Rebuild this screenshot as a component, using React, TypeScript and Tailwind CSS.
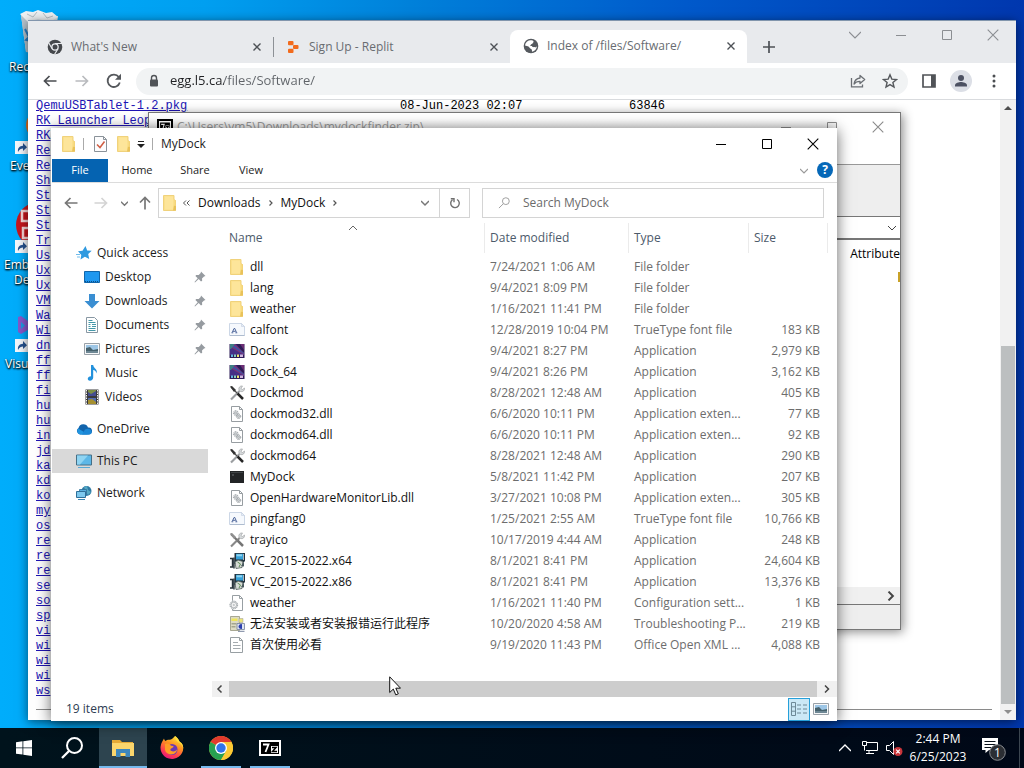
import type { ReactNode } from "react";

type IconProps = { className?: string };

/* ---------- shared glyphs ---------- */

function Cross({ className = "size-3" }: IconProps) {
  return (
    <svg viewBox="0 0 12 12" className={className} fill="none" stroke="currentColor" strokeWidth="1.1">
      <path d="M.7.7l10.6 10.6M11.3.7L.7 11.3" />
    </svg>
  );
}

function Square({ className = "size-3" }: IconProps) {
  return (
    <svg viewBox="0 0 12 12" className={className} fill="none" stroke="currentColor">
      <path d="M1.500 1.500h9v9h-9z" />
    </svg>
  );
}

function Dash({ className = "size-3" }: IconProps) {
  return (
    <svg viewBox="0 0 12 12" className={className} fill="none" stroke="currentColor">
      <path d="M1 6.500h10" />
    </svg>
  );
}

function Chevron({ className = "size-2", d = "M0 2l4 4 4-4", w = 1.2 }: IconProps & { d?: string; w?: number }) {
  return (
    <svg viewBox="0 0 8 8" className={className} fill="none" stroke="currentColor" strokeWidth={w}>
      <path d={d} />
    </svg>
  );
}
const RIGHT = "M2 .5L5.5 4 2 7.5";
const LEFT = "M5.5 .5L2 4l3.500 3.500";
const UP = "M0 6l4-4 4 4";
const CRUMB = "M2.500 1.500L5 4 2.500 6.500";

function Arrow({ className = "", rotate = 0 }: IconProps & { rotate?: number }) {
  return (
    <svg viewBox="0 0 14 14" className={"size-3.5 " + className} fill="none" stroke="currentColor" strokeWidth="1.7">
      <path transform={`rotate(${rotate} 7 7)`} d="M13.500 7H1.500M6.500 2L1.500 7l5 5" />
    </svg>
  );
}

/* ---------- file icons, 16px ---------- */

function Svg16({ children, className = "size-4" }: { children: ReactNode; className?: string }) {
  return (
    <svg viewBox="0 0 16 16" className={className + " shrink-0"}>
      {children}
    </svg>
  );
}

function FolderIcon() {
  return (
    <Svg16>
      <path d="M1.500.500h10.500v4l1.500 1v10H1.500z" fill="#fbe08a" stroke="#f0d27c" />
      <path d="M3 1.500h8v13H3z" fill="#fde59a" />
      <path d="M12 10.500l2 .5v4.500h-3z" fill="#e9c25a" />
      <path d="M12.500 5l1.500.5v5.500l-1.500-.5z" fill="#f4d478" />
    </Svg16>
  );
}

function CheckDocIcon() {
  return (
    <Svg16>
      <path d="M2.500.500h9l3 3v12h-12z" fill="#fcfcfd" stroke="#8a9299" />
      <path d="M11.500.500v3h3" fill="none" stroke="#8a9299" />
      <path d="M5 8.500l3 3 4.500-6" fill="none" stroke="#cf5d43" strokeWidth="1.500" />
    </Svg16>
  );
}

function FontIcon() {
  return (
    <Svg16>
      <path d="M.500 1.500h12l3 3v9H.500z" fill="#f6f9fd" stroke="#ccd7e6" />
      <path d="M12.500 1.500v3h3z" fill="#e6edf6" stroke="#c3cfdf" strokeWidth=".6" />
      <path d="M1 13.500h14.500" stroke="#aebccf" />
      <path d="M3.200 10.500L5 6.500h.8l1.700 4M4 9.300h2.600" fill="none" stroke="#3d5791" strokeWidth=".9" />
      <path d="M2.500 10.800h1.800M6.300 10.800h2" stroke="#3d5791" strokeWidth=".8" />
    </Svg16>
  );
}

function DockIcon() {
  return (
    <Svg16>
      <rect x=".5" y="1" width="15" height="14" fill="#2c1c56" />
      <path d="M1 1h6l8 10v1H1z" fill="#453086" />
      <path d="M1 4l5-3 9 9v2z" fill="#7d3378" />
      <path d="M2 3h4l9 7v1z" fill="#3b55a4" />
      <path d="M1 1h5L2 6H1z" fill="#3f7f85" />
      <path d="M11 1h4v6z" fill="#6c2d74" />
      <path d="M2 11.500h2v2.500H2z" fill="#63b5e0" />
      <path d="M5 11.500h2v2.500H5z" fill="#8ad0c0" />
      <path d="M8 11.500h2v2.500H8z" fill="#ede670" />
      <path d="M11 11.500h3v2.500h-3z" fill="#d3b9df" />
    </Svg16>
  );
}

function ToolsIcon({ light = false }: { light?: boolean }) {
  return (
    <Svg16>
      <path d="M2 14.500L10.500 6" stroke={light ? "#888" : "#9b9ea1"} strokeWidth="2.200" />
      <path d="M13.500 1a3 3 0 0 0-3.500 4l1.500 1.500A3 3 0 0 0 15.500 3l-2 1.500L12 3.500z" fill="#d6d9db" stroke="#9a9da0" strokeWidth=".6" />
      <path d="M2 2l6 6" stroke={light ? "#747474" : "#4b4b4b"} strokeWidth={light ? 2.2 : 1.3} />
      <path d="M1 1.500L3 1l4 4-2 2z" fill={light ? "#909090" : "#333"} />
      <path d="M8.500 8.500l5.500 5.500" stroke={light ? "#757575" : "#262626"} strokeWidth="2.500" />
    </Svg16>
  );
}

function Gear({ x, y, r }: { x: number; y: number; r: number }) {
  return (
    <g fill="none" stroke="#8d9499">
      <circle cx={x} cy={y} r={r} strokeDasharray="1.200 .7" strokeWidth="1" />
      <circle cx={x} cy={y} r={r - 1} strokeWidth=".6" />
      <circle cx={x} cy={y} r=".7" strokeWidth=".5" />
    </g>
  );
}

function DllIcon() {
  return (
    <Svg16>
      <path d="M2.500.500h8l3 3v12h-11z" fill="#fff" stroke="#979da1" />
      <path d="M10.500.500v3h3" fill="none" stroke="#979da1" />
      <Gear x={6.800} y={7} r={2.400} />
      <Gear x={9.500} y={10.300} r={2.200} />
    </Svg16>
  );
}

function ConfigIcon() {
  return (
    <Svg16>
      <path d="M3.500.500h7l3 3v12h-10z" fill="#fff" stroke="#989fa3" />
      <path d="M10.500.500v3h3" fill="none" stroke="#989fa3" />
      <circle cx="4.800" cy="10" r="4.400" fill="#f4f4f4" />
      <Gear x={4.800} y={10} r={3.800} />
    </Svg16>
  );
}

function BlackIcon() {
  return (
    <Svg16>
      <rect x="1" y="2" width="14" height="12" fill="#222426" />
      <path d="M2 3h12v1H2z" fill="#404446" />
      <path d="M3 6h2" stroke="#6a6f72" />
    </Svg16>
  );
}

function InstallerIcon() {
  return (
    <Svg16>
      <path d="M5.500 0H16v8l-3 3H5.500z" fill="#22333f" />
      <path d="M7 .800h7V6.500H7z" fill="#35a1d8" />
      <path d="M7.500 1.300h5.500v2H7.500z" fill="#8fd4f2" />
      <path d="M14.500 1v6" stroke="#cfd6da" strokeWidth=".8" />
      <path d="M6 9l3-2 5 1.500-1 6-6 1z" fill="#d7dcd6" stroke="#4c5957" strokeWidth=".8" />
      <path d="M8.500 9l3 2-1.500 3" fill="none" stroke="#5b8b54" />
      <path d="M1 5.500h2.500V14H1M5 4.500v11" fill="none" stroke="#27333a" strokeWidth="1.400" />
      <path d="M12 13l3-4v4.500z" fill="#4a5a60" />
    </Svg16>
  );
}

function TroubleIcon() {
  return (
    <Svg16>
      <path d="M1.500.500h9v14h-9z" fill="#dddcc4" stroke="#95957f" strokeWidth=".8" />
      <path d="M2.500 2.500h6v2.500h-6z" fill="#eee55a" />
      <path d="M2.500 7h5v1.500h-5zM2.500 10h4v1.500h-4z" fill="#a3a58e" />
      <path d="M10 2.500h4v4h-4z" fill="#ebe47c" stroke="#999" strokeWidth=".5" />
      <path d="M8 7.500h7.500v6H8z" fill="#dfe5f3" stroke="#75819b" strokeWidth=".8" />
      <path d="M13 8.200a2.500 2.500 0 1 0 0 4.600z" fill="#2c3fae" />
      <path d="M9 15.300h6.500" stroke="#75819b" />
    </Svg16>
  );
}

function TextDocIcon() {
  return (
    <Svg16>
      <path d="M1.500.500h9l3 3v12h-12z" fill="#fff" stroke="#989fa3" />
      <path d="M10.500.500v3h3" fill="none" stroke="#989fa3" />
      <path d="M4 5.500h5M4 8.500h7.500M4 11.500h7.500" stroke="#a5abaf" />
    </Svg16>
  );
}

/* ---------- navigation icons ---------- */

function StarIcon() {
  return (
    <Svg16>
      <path d="M9.500 1l1.700 4.600 4.500.2-3.500 3.300 1 4.900-4.300-2.300-4.400 2.900.8-4.700L2 6.200l4.500-.4z" fill="#2f9ae0" />
      <path d="M0 9.500h4M1 12h3" stroke="#71bdec" />
    </Svg16>
  );
}

function DesktopIcon() {
  return (
    <Svg16>
      <path d="M.500 2.500h15v11H.500z" fill="#1f98f0" stroke="#1166ab" />
      <path d="M1 12.500h14" stroke="#0a4e86" strokeDasharray="1 1" />
    </Svg16>
  );
}

function DownloadIcon() {
  return (
    <Svg16>
      <path d="M5 1h6v7h4.500L8 15.500.500 8H5z" fill="#3a8ed2" />
    </Svg16>
  );
}

function DocumentsIcon() {
  return (
    <Svg16>
      <path d="M2.500.500h8l3 3v12h-11z" fill="#fff" stroke="#8897a3" />
      <path d="M4.500 3.500h4M4.500 5.500h7M4.500 7.500h2M8 7.500h4M4.500 9.500h2M8 9.500h4M4.500 11.500h7M4.500 13.500h7" stroke="#4598a9" />
    </Svg16>
  );
}

function PictureIcon() {
  return (
    <Svg16>
      <path d="M.500 2.500h15v11H.500z" fill="#f6f7f8" stroke="#99a1a8" />
      <path d="M2 4h12v8H2z" fill="#9dc6e6" />
      <path d="M2 7l4-1 3 3 5-1v4H2z" fill="#45616c" />
      <path d="M2 10h12v2H2z" fill="#6d8794" />
    </Svg16>
  );
}

function MusicIcon() {
  return (
    <Svg16>
      <path d="M7 0h2.200c.3 3.500 4.300 3.600 3.600 8.500-.8-2.500-2-3.300-3.600-3.500V12.500c0 2-1.500 3.200-3.200 3.200-3.200 0-3-4.500 1-4.500z" fill="#2391dc" />
    </Svg16>
  );
}

function VideoIcon() {
  return (
    <Svg16>
      <path d="M1.500.500h13v15h-13z" fill="#39393b" />
      <path d="M4 1h8v6H4z" fill="#7d8f46" />
      <path d="M4 3l3 2 5-3v5H4z" fill="#444d91" />
      <path d="M4 9h8v6H4z" fill="#536caf" />
      <path d="M4 11l4-1 4 3v2H4z" fill="#a6902f" />
      <path d="M2.500 1v14M13.500 1v14" stroke="#f1f1f1" strokeDasharray="1.500 1" />
    </Svg16>
  );
}

function CloudIcon() {
  return (
    <Svg16>
      <path d="M4 13.500A3.600 3.600 0 0 1 2.500 7 5 5 0 0 1 12 6.500a3.500 3.500 0 0 1 1 7z" fill="#1264ac" />
      <path d="M3 8l9 5.500H4A3.500 3.500 0 0 1 3 7z" fill="#2295e0" />
      <path d="M9 8.500c3-2 7 0 6.700 2.500a2.700 2.700 0 0 1-2.700 2.500H6z" fill="#1b87d6" />
    </Svg16>
  );
}

function PcIcon() {
  return (
    <Svg16>
      <path d="M.500 2h15v10H.500z" fill="#5db7e7" stroke="#466f86" />
      <path d="M1 2.500h11L4 11.500H1z" fill="#8fd4f2" />
      <path d="M2 14.500h12" stroke="#58a9d5" />
    </Svg16>
  );
}

function NetworkIcon() {
  return (
    <Svg16>
      <circle cx="10.500" cy="6" r="5" fill="#2d7aa5" />
      <path d="M8 2l3-1 1 4 3 2-3 3-2-3z" fill="#55a9c4" />
      <path d="M3.500 4.500h7v5h-7z" fill="#57aede" stroke="#2e6f98" strokeWidth=".8" />
      <path d="M.500 6.500h9v6h-9z" fill="#7cc8ee" stroke="#2e6f98" />
      <path d="M2 14.500h7" stroke="#3987b4" />
    </Svg16>
  );
}

function PinIcon() {
  return (
    <svg viewBox="0 0 12 12" className="size-3">
      <path d="M7 .5l4.500 4.500-1.500.4-2 2 .2 2.400-1.200.7-2.300-2.400L1 11.500.5 11l3.200-3.800-2.300-2.200.8-1.100 2.500.2 2-2z" fill="#969ba0" />
    </svg>
  );
}

/* ---------- Chrome pieces ---------- */

function ChromeMono() {
  return (
    <svg viewBox="0 0 16 16" className="size-4">
      <circle cx="8" cy="8" r="7.300" fill="#45484c" />
      <circle cx="8" cy="8" r="3.800" fill="#e8eaed" />
      <circle cx="8" cy="8" r="2.500" fill="#45484c" />
      <path d="M8 4.500h7M5 9.500L1.500 3.500M11 9.800L7.500 15.500" stroke="#e8eaed" strokeWidth="1.200" />
    </svg>
  );
}

function ReplitIcon() {
  return (
    <svg viewBox="0 0 16 16" className="size-4" fill="#f26b1d">
      <rect x="3" y="2" width="5.500" height="4.200" rx="1" />
      <rect x="8" y="5.900" width="5.500" height="4.200" rx="1" />
      <rect x="3" y="9.800" width="5.500" height="4.200" rx="1" />
    </svg>
  );
}

function GlobeIcon() {
  return (
    <svg viewBox="0 0 16 16" className="size-4">
      <circle cx="8" cy="8" r="7.300" fill="#55595e" />
      <path d="M7 2.200c3 0 3.200.4 3.700 1.800-1.300.4-.2 1.700-2 2-1.500.2-.6 1.900-2 2H9c.5 2 1.800.5 3.300 1.500C13 8.500 14 9 14 8c-.2 3-2 5.300-5 5.800-.2-1.600.4-2.300-1-2.800-1.700-.6-1.500-2.400-3.200-2.700L2 7.500c.3-3 2.400-5 5-5.300z" fill="#fff" />
    </svg>
  );
}

function ReloadIcon() {
  return (
    <svg viewBox="0 0 16 16" className="size-4" fill="none" stroke="#55585c" strokeWidth="1.800">
      <path d="M13.800 9.500a6.200 6.200 0 1 1-1-5.500" />
      <path d="M15 .8v6H9z" fill="#55585c" stroke="none" />
    </svg>
  );
}

function LockIcon() {
  return (
    <svg viewBox="0 0 12 14" className="h-3.5 w-3">
      <path d="M3.500 6V4a2.500 2.500 0 0 1 5 0v2" fill="none" stroke="#505357" strokeWidth="1.400" />
      <rect x="2" y="5.500" width="8" height="7" rx="1" fill="#505357" />
    </svg>
  );
}

function ShareIcon() {
  return (
    <svg viewBox="0 0 16 16" className="size-4" fill="none" stroke="#6a6e73" strokeWidth="1.300">
      <path d="M1.500 5v8.800h11V11.500" />
      <path d="M10 2.500l4.700 4L10 10.500V8.300c-3 0-4.600.8-6 2.700.5-3.600 2.500-5.600 6-6z" strokeLinejoin="round" />
    </svg>
  );
}

function BookmarkStar() {
  return (
    <svg viewBox="0 0 16 16" className="size-4" fill="none" stroke="#55585c" strokeWidth="1.400">
      <path d="M8 1.800l1.800 4.300 4.700.4-3.600 3 1.100 4.600-4-2.500-4 2.500 1.100-4.600-3.600-3 4.700-.4z" />
    </svg>
  );
}

function SidePanelIcon() {
  return (
    <svg viewBox="0 0 14 14" className="size-3.5">
      <path d="M1 1h12v12H1z" fill="#fff" stroke="#505357" strokeWidth="1.700" />
      <path d="M9 1h4v12H9z" fill="#505357" />
    </svg>
  );
}

function AvatarIcon() {
  return (
    <svg viewBox="0 0 22 22" className="size-[22px]">
      <circle cx="11" cy="11" r="11" fill="#dcdfe6" />
      <circle cx="11" cy="8" r="3" fill="#4c5162" />
      <path d="M5 16.500v-1.300C5 13 9 12 11 12s6 1 6 3.200v1.300z" fill="#4c5162" />
    </svg>
  );
}

function BrowserTab({ icon, title, label, width }: { icon: ReactNode; title: string; label: string; width: string }) {
  return (
    <div className={"flex h-8 items-center pr-2 pl-[19px] " + width}>
      {icon}
      <span className="ml-2 flex-1 text-[12px] text-[#686c71]">{title}</span>
      <button aria-label={label} className="p-1 text-[#4d5156]">
        <svg viewBox="0 0 8 8" className="size-2" stroke="currentColor" strokeWidth="1.400">
          <path d="M.5.500l7 7M7.500.500l-7 7" />
        </svg>
      </button>
    </div>
  );
}

const LISTING =
  "QemuUSBTablet-1.2.pkg|RK Launcher Leop|RK|Re|Re|Sh|St|St|St|Tr|Us|Ux|Ux|VM|Wa|Wi|dn|ff|ff|fi|hu|hu|in|jd|ka|kd|ko|my|os|re|re|re|se|so|sp|vi|wi|wi|wi|ws".split("|");

function BrowserWindow() {
  return (
    <section
      aria-label="Browser"
      className="absolute top-5 right-2 bottom-2 left-7 flex flex-col overflow-hidden border-t border-[#8296ad] bg-white shadow-[0_2px_10px_rgba(0,0,0,0.55)]"
    >
      <header className="flex h-[42px] shrink-0 items-end bg-[#e8eaed]">
        <BrowserTab icon={<ChromeMono />} title="What's New" label="Close What's New" width="w-[245px]" />
        <span className="mb-1.5 h-5 w-px bg-[#8d9196]" />
        <BrowserTab icon={<span className="-ml-2 flex"><ReplitIcon /></span>} title="Sign Up - Replit" label="Close Sign Up" width="w-[236px]" />
        <div className="rounded-t-lg bg-white pb-px">
          <BrowserTab icon={<span className="-ml-1.5 flex"><GlobeIcon /></span>} title="Index of /files/Software/" label="Close Index" width="w-[237px]" />
        </div>
        <button aria-label="New tab" className="mb-2.5 ml-4 text-[#4d5156]">
          <svg viewBox="0 0 12 12" className="size-3" stroke="currentColor" strokeWidth="1.700">
            <path d="M6 0v12M0 6h12" />
          </svg>
        </button>
        <div className="mr-[17px] mb-[22px] ml-auto flex items-center gap-[34px] text-[#8b8e92]">
          <button aria-label="Search tabs"><Chevron className="size-3" w={0.8} /></button>
          <button aria-label="Minimize browser"><Dash /></button>
          <button aria-label="Maximize browser"><Square /></button>
          <button aria-label="Close browser"><Cross /></button>
        </div>
      </header>
      <div className="flex h-[37px] shrink-0 items-center border-b border-[#d9dbde] pr-5 pl-[15px]">
        <button aria-label="Back" className="text-[#4b4e52]"><Arrow /></button>
        <button aria-label="Forward" className="ml-[18px] text-[#b9bbbe]"><Arrow rotate={180} /></button>
        <button aria-label="Reload" className="ml-[17px]"><ReloadIcon /></button>
        <div className="ml-3.5 flex h-[27px] flex-1 items-center rounded-full bg-[#f1f3f4] pr-2.5 pl-3">
          <LockIcon />
          <input
            aria-label="Address"
            defaultValue="egg.l5.ca/files/Software/"
            className="ml-2.5 min-w-0 flex-1 bg-[linear-gradient(90deg,#202124_54px,#5f6368_54px)] bg-clip-text text-[13px] text-transparent outline-none"
          />
          <button aria-label="Share"><ShareIcon /></button>
          <button aria-label="Bookmark" className="ml-4"><BookmarkStar /></button>
        </div>
        <button aria-label="Side panel" className="ml-3.5"><SidePanelIcon /></button>
        <button aria-label="Profile" className="ml-3.5"><AvatarIcon /></button>
        <button aria-label="Browser menu" className="ml-5">
          <svg viewBox="0 0 4 14" className="h-3.5 w-1" fill="#4b4e52">
            <circle cx="2" cy="2" r="1.500" /><circle cx="2" cy="7" r="1.500" /><circle cx="2" cy="12" r="1.500" />
          </svg>
        </button>
      </div>
      <div className="flex min-h-0 flex-1">
        <div className="min-w-0 flex-1 px-2 font-['Liberation_Mono',monospace] text-[12px] leading-[15px]">
          <ul className="-mt-px">
            {LISTING.map((name, i) => (
              <li key={i} className="flex h-[15px] whitespace-pre">
                <a href={"#file-" + i} className="block w-[364px] text-[#2014b4] underline">{name}</a>
                {i === 0 && (
                  <>
                    <span className="block w-[229px] text-black">08-Jun-2023 02:07</span>
                    <span className="text-black">63846</span>
                  </>
                )}
              </li>
            ))}
          </ul>
          <hr className="mt-2.5 border-[#8a8a8a]" />
        </div>
        <div className="flex w-4 flex-col items-center bg-[#f1f1f1]">
          <svg viewBox="0 0 8 4" className="my-1.5 h-1 w-2" fill="#4d4d4d"><path d="M0 4l4-4 4 4z" /></svg>
          <div className="flex-[230]" />
          <div className="w-3.5 flex-[357] bg-[#bcbfc0]" />
          <svg viewBox="0 0 8 4" className="my-1.5 h-1 w-2" fill="#8d8d8d"><path d="M0 0l4 4 4-4z" /></svg>
        </div>
      </div>
    </section>
  );
}

/* ---------- 7-Zip ---------- */

function SevenZip({ className }: { className: string }) {
  return (
    <svg viewBox="0 0 22 16" className={className} preserveAspectRatio="none">
      <rect width="22" height="16" fill="#fff" />
      <rect x="2" y="2" width="18" height="12" fill="#000" />
      <rect x="12" y="6" width="7" height="7" fill="#fff" />
      <path d="M4 4.500h5.500L6.500 12" fill="none" stroke="#fff" strokeWidth="1.800" />
      <path d="M13 7.500h4L13.500 11.500h4.500" fill="none" stroke="#000" strokeWidth="1.500" />
    </svg>
  );
}

function ZipWindow() {
  return (
    <section
      aria-label="Archive"
      className="absolute top-28 left-[148px] flex h-[518px] w-[753px] flex-col overflow-hidden border border-[#777] bg-white text-[12px] shadow-[2px_2px_10px_rgba(0,0,0,0.45)]"
    >
      <div className="flex h-7 shrink-0 items-center bg-linear-to-b from-white from-20% to-[#ddd] pr-4 pl-2 text-[#999]">
        <span className="mr-1 border-2 border-black"><SevenZip className="size-3" /></span>
        <span className="flex-1">C:\Users\vm5\Downloads\mydockfinder.zip\</span>
      </div>
      <div className="absolute top-2 right-4 flex gap-[34px] text-[#8b8b8b]">
        <button aria-label="Minimize archive"><Dash /></button>
        <button aria-label="Maximize archive"><Square /></button>
        <button aria-label="Close archive"><Cross /></button>
      </div>
      <div className="-mt-7 ml-auto h-[51px] w-16 shrink-0 bg-white" />
      <div className="h-[52px] shrink-0 border-t border-[#999] bg-[#eee]" />
      <div className="flex h-6 shrink-0 items-center justify-end border-t border-b-2 border-[#777] pr-1 text-[#444]">
        <Chevron className="size-2" w={1} />
      </div>
      <div className="flex flex-1 flex-col">
        <div className="flex h-7 items-center justify-end text-black">Attribute</div>
        <div className="mt-1 ml-auto h-2.5 w-0.5 bg-[#c9a227]" />
      </div>
      <div className="flex h-[18px] shrink-0 items-center justify-end border-b border-[#777] bg-[#f0f0f0] pr-1">
        <Chevron d={RIGHT} w={1.6} className="size-2.5 text-[#444]" />
      </div>
      <div className="h-6 shrink-0 bg-[#eee]" />
    </section>
  );
}

/* ---------- File Explorer ---------- */

const PLACES: { name: string; icon: ReactNode; pinned?: boolean }[] = [
  { name: "Desktop", icon: <DesktopIcon />, pinned: true },
  { name: "Downloads", icon: <DownloadIcon />, pinned: true },
  { name: "Documents", icon: <DocumentsIcon />, pinned: true },
  { name: "Pictures", icon: <PictureIcon />, pinned: true },
  { name: "Music", icon: <MusicIcon /> },
  { name: "Videos", icon: <VideoIcon /> },
];

const APP = "Application";
const FILES: [ReactNode, string, string, string, string][] = [
  [<FolderIcon />, "dll", "7/24/2021 1:06 AM", "File folder", ""],
  [<FolderIcon />, "lang", "9/4/2021 8:09 PM", "File folder", ""],
  [<FolderIcon />, "weather", "1/16/2021 11:41 PM", "File folder", ""],
  [<FontIcon />, "calfont", "12/28/2019 10:04 PM", "TrueType font file", "183 KB"],
  [<DockIcon />, "Dock", "9/4/2021 8:27 PM", APP, "2,979 KB"],
  [<DockIcon />, "Dock_64", "9/4/2021 8:26 PM", APP, "3,162 KB"],
  [<ToolsIcon />, "Dockmod", "8/28/2021 12:48 AM", APP, "405 KB"],
  [<DllIcon />, "dockmod32.dll", "6/6/2020 10:11 PM", "Application exten...", "77 KB"],
  [<DllIcon />, "dockmod64.dll", "6/6/2020 10:11 PM", "Application exten...", "92 KB"],
  [<ToolsIcon />, "dockmod64", "8/28/2021 12:48 AM", APP, "290 KB"],
  [<BlackIcon />, "MyDock", "5/8/2021 11:42 PM", APP, "207 KB"],
  [<DllIcon />, "OpenHardwareMonitorLib.dll", "3/27/2021 10:08 PM", "Application exten...", "305 KB"],
  [<FontIcon />, "pingfang0", "1/25/2021 2:55 AM", "TrueType font file", "10,766 KB"],
  [<ToolsIcon light />, "trayico", "10/17/2019 4:44 AM", APP, "248 KB"],
  [<InstallerIcon />, "VC_2015-2022.x64", "8/1/2021 8:41 PM", APP, "24,604 KB"],
  [<InstallerIcon />, "VC_2015-2022.x86", "8/1/2021 8:41 PM", APP, "13,376 KB"],
  [<ConfigIcon />, "weather", "1/16/2021 11:40 PM", "Configuration sett...", "1 KB"],
  [<TroubleIcon />, "无法安装或者安装报错运行此程序", "10/20/2020 4:58 AM", "Troubleshooting P...", "219 KB"],
  [<TextDocIcon />, "首次使用必看", "9/19/2020 11:43 PM", "Office Open XML ...", "4,088 KB"],
];

function NavRoot({ icon, name, active = false }: { icon: ReactNode; name: string; active?: boolean }) {
  return (
    <button className={"flex h-6 w-full items-center gap-[5px] pl-6 " + (active ? "bg-[#d9d9d9]" : "")}>
      {icon}
      {name}
    </button>
  );
}

function ExplorerWindow() {
  return (
    <section
      aria-label="MyDock"
      className="absolute top-32 left-[51px] flex h-[593px] w-[786px] flex-col bg-white pl-px text-[12px] text-[#1c1c1c] shadow-[0_2px_14px_rgba(0,0,0,0.6)]"
    >
      <header className="flex h-[31px] shrink-0 items-center pl-[9px]">
        <FolderIcon />
        <span className="ml-1.5 h-3 w-px bg-[#aaa]" />
        <button aria-label="Properties" className="ml-2 flex"><CheckDocIcon /></button>
        <button aria-label="New folder" className="ml-2 flex"><FolderIcon /></button>
        <button aria-label="Customize toolbar" className="ml-[5px]">
          <svg viewBox="0 0 8 8" className="size-2"><path d="M1 1h6v1H1zM0 4h8L4 8z" fill="#222" /></svg>
        </button>
        <span className="ml-[7px] h-3 w-px bg-[#aaa]" />
        <h1 className="ml-2 flex-1">MyDock</h1>
        <div className="flex gap-[34px] pr-[18px] text-black">
          <button aria-label="Minimize"><Dash /></button>
          <button aria-label="Maximize"><Square /></button>
          <button aria-label="Close"><Cross /></button>
        </div>
      </header>
      <nav className="flex h-6 shrink-0 items-stretch border-b border-[#dcdcdc] pr-1 text-[11px]">
        <button className="w-14 bg-[#0563b1] text-white">File</button>
        <button className="w-[58px]">Home</button>
        <button className="w-[58px]">Share</button>
        <button className="w-[54px]">View</button>
        <button aria-label="Expand ribbon" className="mr-[9px] ml-auto text-[#999]"><Chevron className="size-2" /></button>
        <button aria-label="Help" className="mt-[3px] size-4 rounded-full bg-[#0668b8] text-[12px] leading-4 font-bold text-white">?</button>
      </nav>
      <div className="flex h-10 shrink-0 items-center pr-[13px] pl-3 text-[#777]">
        <button aria-label="Back"><Arrow /></button>
        <button aria-label="Forward" className="ml-4 text-[#d4d4d4]"><Arrow rotate={180} /></button>
        <button aria-label="Recent" className="ml-[13px]"><Chevron w={1.6} className="size-[7px]" /></button>
        <button aria-label="Up" className="mr-1.5 ml-2.5"><Arrow rotate={90} /></button>
        <div className="flex h-[30px] w-[312px] items-center border border-[#d4d4d4] pl-[3px] text-[#111]">
          <FolderIcon />
          <svg viewBox="0 0 8 8" className="ml-1 size-2" fill="none" stroke="#555"><path d="M4 1.500L1.500 4 4 6.500M7.500 1.500L5 4l2.500 2.500" /></svg>
          <button className="ml-2">Downloads</button>
          <Chevron d={CRUMB} className="mx-1.5 size-2 text-[#555]" />
          <button>MyDock</button>
          <Chevron d={CRUMB} className="ml-1.5 size-2 text-[#555]" />
          <button aria-label="Previous locations" className="mr-2.5 ml-auto text-[#777]"><Chevron w={1.5} className="size-2" /></button>
          <button aria-label="Refresh" className="flex h-full w-[30px] items-center justify-center border-l border-[#d4d4d4]">
            <svg viewBox="0 0 12 12" className="size-3" fill="none" stroke="#707070" strokeWidth="1.400">
              <path d="M8 2.500a4.300 4.300 0 1 1-4.500.3" /><path d="M1.800 1.800H5V5.200" />
            </svg>
          </button>
        </div>
        <label className="ml-3 flex h-[30px] flex-1 items-center border border-[#d4d4d4] pl-[15px]">
          <svg viewBox="0 0 14 14" className="size-3.5" fill="none" stroke="#999" strokeWidth="1">
            <circle cx="8.500" cy="5" r="3.700" /><path d="M5.800 7.800L1 12.500" />
          </svg>
          <input aria-label="Search MyDock" placeholder="Search MyDock" className="ml-3 w-full outline-none placeholder:text-[#6b6b6b]" />
        </label>
      </div>
      <div className="flex min-h-0 flex-1">
        <nav className="w-[156px] shrink-0 pt-[18px]">
          <NavRoot icon={<StarIcon />} name="Quick access" />
          {PLACES.map((p) => (
            <button key={p.name} className="flex h-6 w-full items-center gap-[5px] pr-0.5 pl-8">
              {p.icon}
              <span className="flex-1 text-left">{p.name}</span>
              {p.pinned && <PinIcon />}
            </button>
          ))}
          <div className="mt-2 flex flex-col gap-2">
            <NavRoot icon={<CloudIcon />} name="OneDrive" />
            <NavRoot icon={<PcIcon />} name="This PC" active />
            <NavRoot icon={<NetworkIcon />} name="Network" />
          </div>
        </nav>
        <div className="flex min-w-0 flex-1 flex-col pl-1">
          <table className="w-[616px] table-fixed border-collapse">
            <colgroup>
              <col /><col className="w-36" /><col className="w-[120px]" /><col className="w-20" />
            </colgroup>
            <thead>
              <tr className="text-left text-[#4c5a6b]">
                {["Name", "Date modified", "Type", "Size"].map((h, i) => (
                  <th key={h} className="p-0 pb-[3px] font-normal">
                    <div className={"relative flex h-[30px] items-center " + (i === 0 ? "pl-[17px]" : i === 3 ? "border-x border-[#ebebeb] pl-[5px]" : "border-l border-[#ebebeb] pl-[5px]")}>
                      {h}
                      {i === 0 && <Chevron d={UP} w={0.9} className="absolute top-px left-[137px] size-2 text-[#555]" />}
                    </div>
                  </th>
                ))}
              </tr>
            </thead>
            <tbody className="text-[#6d6d6d]">
              {FILES.map(([icon, name, date, type, size], i) => (
                <tr key={i} className="h-[21px] whitespace-nowrap">
                  <td className="p-0 pl-[17px] text-[#111]">
                    <div className="flex items-center gap-[5px]">{icon}<span>{name}</span></div>
                  </td>
                  <td className="p-0 pl-1.5">{date}</td>
                  <td className="p-0 pl-1.5">{type}</td>
                  <td className="p-0 pr-2 text-right">{size}</td>
                </tr>
              ))}
            </tbody>
          </table>
          <div className="mt-auto flex h-4 items-center bg-[#f0f0f0] text-[#444]">
            <Chevron d={LEFT} w={1.5} className="mx-1 size-2" />
            <div className="ml-px h-full flex-1 bg-[#cdcdcd]" />
            <Chevron d={RIGHT} w={1.5} className="mx-1.5 size-2" />
          </div>
        </div>
      </div>
      <footer className="flex h-6 shrink-0 items-center pr-2 pl-3.5 text-[#2d3c52]">
        <span className="flex-1">19 items</span>
        <button aria-label="Details view" className="flex h-[23px] w-[22px] items-center justify-center border border-[#26a0da] bg-[#cbe8f6]">
          <svg viewBox="0 0 16 14" className="h-3.5 w-4" fill="none" stroke="#6d8896">
            <path d="M.5.500h4v13h-4zM.5 4.800h4M.5 9.200h4M6 3h4M6 7h4M6 11h4M12 3h4M12 7h4M12 11h4" />
          </svg>
        </button>
        <button aria-label="Thumbnail view" className="ml-[3px]"><PictureIcon /></button>
      </footer>
    </section>
  );
}

/* ---------- Desktop ---------- */

const LABEL = "whitespace-nowrap text-[12px] leading-[15px] text-white [text-shadow:0_1px_2px_#000,1px_1px_2px_#000]";

function ShortcutBadge() {
  return (
    <g>
      <rect x="0" y="35" width="13" height="13" fill="#f3f6fa" />
      <path d="M3 46c-.5-4 1.500-6 5-6.200V37l4 4.300L8 45v-2.500c-2 0-3.500.8-5 3.500z" fill="#24518f" />
    </g>
  );
}

function DesktopItem({ drawing, lines, indents }: { drawing: ReactNode; lines: string[]; indents: string[] }) {
  return (
    <div className="h-[99px]">
      <svg viewBox="0 0 48 48" className="ml-[15px] size-12">{drawing}</svg>
      {lines.map((l, i) => (
        <p key={l} className={LABEL + " " + indents[i]}>{l}</p>
      ))}
    </div>
  );
}

function DesktopIcons() {
  return (
    <div className="pt-[7px] [&_p:first-of-type]:mt-1">
      <DesktopItem
        lines={["Rec"]}
        indents={["pl-[9px]"]}
        drawing={
          <>
            <path d="M6 8l37 1-5 36H11z" fill="#d9e0e5" />
            <path d="M6 8l5 37 6 1L12 9z" fill="#b7c4cd" />
            <path d="M5 7l6-3 7 1 5-2 8 3 6-1 6 5-8 5-12-3-10 3z" fill="#eef1f3" />
            <path d="M12 7l6 3 4-5M28 6l4 5 6-2" fill="none" stroke="#b5bdc3" />
            <path d="M10 22l4 8-3 3 5 1" fill="none" stroke="#2b7fc4" strokeWidth="2" />
          </>
        }
      />
      <DesktopItem
        lines={["Eve"]}
        indents={["pl-[10px]"]}
        drawing={
          <>
            <circle cx="26" cy="19" r="15" fill="#e8701a" />
            <circle cx="27" cy="18" r="11" fill="#7a3a1f" />
            <ShortcutBadge />
          </>
        }
      />
      <DesktopItem
        lines={["Emb", "De"]}
        indents={["pl-1", "pl-3.5"]}
        drawing={
          <>
            <circle cx="24" cy="20" r="23" fill="#c5161d" />
            <path d="M7 6h6q3 1 3 5t-3 5H7zM15 23H8v10h8" fill="none" stroke="#f5d5d5" strokeWidth="2.500" />
            <ShortcutBadge />
          </>
        }
      />
      <DesktopItem
        lines={["Visu"]}
        indents={["pl-[5px]"]}
        drawing={
          <>
            <path d="M3 13l3-1 14 10-14 8-3-2z" fill="#8558c9" />
            <path d="M6 18v7l4-3.500z" fill="#1e9be0" />
            <ShortcutBadge />
          </>
        }
      />
    </div>
  );
}

/* ---------- Taskbar ---------- */

function FirefoxIcon() {
  return (
    <svg viewBox="0 0 24 24" className="size-6">
      <defs>
        <linearGradient id="fx" x1=".8" y1="0" x2=".3" y2="1">
          <stop offset="0" stopColor="#fff044" /><stop offset=".4" stopColor="#ff9420" />
          <stop offset=".75" stopColor="#ff3d50" /><stop offset="1" stopColor="#e6157a" />
        </linearGradient>
      </defs>
      <path d="M15 0c4 3 3.500 4.500 5 6 2 1 3 3 3.300 6A11.400 11.400 0 1 1 2 6l2-3.500c.3 1.300.7 2 1.500 2.500 1-.8 2.300-1.300 4-1.200 2-.3 3.500-1.500 5.500-3.800z" fill="url(#fx)" />
      <circle cx="12" cy="13.500" r="5.500" fill="#6b38b5" />
      <path d="M5 8c3-1 4.500 0 6 1.700 1.700 0 2.700.3 2.500 1-.5 1.500-2.700 1-3.200 3.300 1.700 2.300 5 1.700 6.700-.5-.8 6.500-10.500 6.500-12 .5z" fill="#ff9d25" />
      <path d="M15 0c4 3 3.500 4.500 5 6 2 1 3 3 3.300 6-1-3-3.500-5-5.300-6-2.200-1.500-3-3.500-3-6z" fill="#ffe03d" />
    </svg>
  );
}

function ChromeIcon() {
  return (
    <svg viewBox="0 0 24 24" className="size-6">
      <circle cx="12" cy="12" r="12" fill="#fcc934" />
      <path d="M12 12L1.600 6A12 12 0 0 1 22.400 6H12z" fill="#e33b2e" />
      <path d="M12 12l5.200 3L12 24A12 12 0 0 1 1.600 6z" fill="#27a150" />
      <path d="M12 6h10.400A12 12 0 0 1 12 24l5.200-9z" fill="#fcc934" />
      <circle cx="12" cy="12" r="6" fill="#fff" />
      <circle cx="12" cy="12" r="4.700" fill="#3174ea" />
    </svg>
  );
}

function TaskButton({ label, children, mark = "" }: { label: string; children: ReactNode; mark?: string }) {
  return (
    <button aria-label={label} className={"flex h-10 w-12 flex-col items-center " + (mark === "active" ? "bg-[#2d444f]" : "")}>
      <span className="flex flex-1 items-center">{children}</span>
      <span className={"-mt-0.5 h-0.5 " + (mark === "active" ? "w-full bg-[#76b9ed]" : mark === "open" ? "w-10 bg-[#76b9ed]" : "w-0")} />
    </button>
  );
}

function Taskbar() {
  return (
    <footer className="flex h-10 shrink-0 items-center bg-linear-to-r from-[#00131c] to-[#000817] text-white">
      <TaskButton label="Start">
        <svg viewBox="0 0 16 16" className="size-4" fill="#fff"><path d="M0 2.200l6.500-.9v6.200H0zM7.300 1.200L16 0v7.500H7.300zM0 8.300h6.500v6.300L0 13.700zM7.300 8.300H16V16l-8.700-1.200z" /></svg>
      </TaskButton>
      <TaskButton label="Search">
        <svg viewBox="0 0 22 22" className="size-[22px]" fill="none" stroke="#fff" strokeWidth="2"><circle cx="13.500" cy="8.500" r="7.500" /><path d="M8 14l-7 7" strokeWidth="2.300" /></svg>
      </TaskButton>
      <div className="ml-[3px] flex gap-px">
        <TaskButton label="File Explorer" mark="active">
          <svg viewBox="0 0 22 20" className="h-5 w-[22px]">
            <path d="M0 2h8l2 2h11v14H0z" fill="#e6ab37" /><path d="M0 5h22v13H0z" fill="#fbd66c" />
            <path d="M4 11h14v8h-4.500v-4h-5v4H4z" fill="#3d87bd" />
          </svg>
        </TaskButton>
        <TaskButton label="Firefox"><FirefoxIcon /></TaskButton>
        <TaskButton label="Chrome" mark="open"><ChromeIcon /></TaskButton>
        <TaskButton label="7-Zip" mark="open"><SevenZip className="h-4 w-[22px]" /></TaskButton>
      </div>
      <div className="ml-auto flex items-center">
        <button aria-label="Hidden icons"><Chevron d={UP} w={0.9} className="size-3" /></button>
        <svg viewBox="0 0 18 16" className="ml-2.5 h-4 w-[18px]" fill="none" stroke="#fff">
          <path d="M5.500 2.500h11v8H5M8 10.500v3M5 13.500h8M1.500 1.500h4v4h-4zM3.500 5.500v5" />
        </svg>
        <svg viewBox="0 0 18 16" className="ml-1.5 h-4 w-[18px]" fill="none" stroke="#fff">
          <path d="M1.500 5.500h3l4-4v13l-4-4h-3z" />
          <circle cx="13" cy="11.500" r="4.500" fill="#c9353b" stroke="none" />
          <path d="M11.200 9.700l3.600 3.600M14.800 9.700l-3.600 3.600" strokeWidth="1.200" />
        </svg>
        <div className="ml-1 w-[62px] text-center text-[12px] leading-[18px]">
          <div>2:44 PM</div>
          <div>6/25/2023</div>
        </div>
        <button aria-label="Notifications" className="ml-3">
          <svg viewBox="0 0 26 26" className="size-[26px]">
            <path d="M1 3h16v12H8l-3.500 3V15H1z" fill="#fff" />
            <path d="M3.500 6.500h11M3.500 9.500h11M3.500 12.500h7" stroke="#071019" strokeWidth="1.100" />
            <circle cx="16.500" cy="17.500" r="7.800" fill="#2b2e33" stroke="#8a8d91" />
            <text x="16.500" y="22" textAnchor="middle" fontSize="12" fill="#fff">1</text>
          </svg>
        </button>
        <span className="mr-1 ml-3 h-10 w-px bg-[#3c4650]" />
      </div>
    </footer>
  );
}

export default function App() {
  return (
    <div className="flex h-screen min-h-[768px] flex-col overflow-hidden bg-[linear-gradient(90deg,#00adfb_0%,#009ff0_20%,#0081da_40%,#0059cb_67%,#0037ae_100%)] font-['Open_Sans','Noto_Sans_CJK_SC',sans-serif]">
      <main className="relative min-h-0 flex-1">
        <DesktopIcons />
        <BrowserWindow />
        <ZipWindow />
        <ExplorerWindow />
        <svg viewBox="0 0 12 20" className="absolute top-[676px] left-[389px] h-5 w-3">
          <path d="M.7.800v15.700l3.600-3.400 2.500 5.800 2.500-1.100-2.500-5.600h4.700z" fill="#fff" stroke="#111" />
        </svg>
      </main>
      <Taskbar />
    </div>
  );
}
